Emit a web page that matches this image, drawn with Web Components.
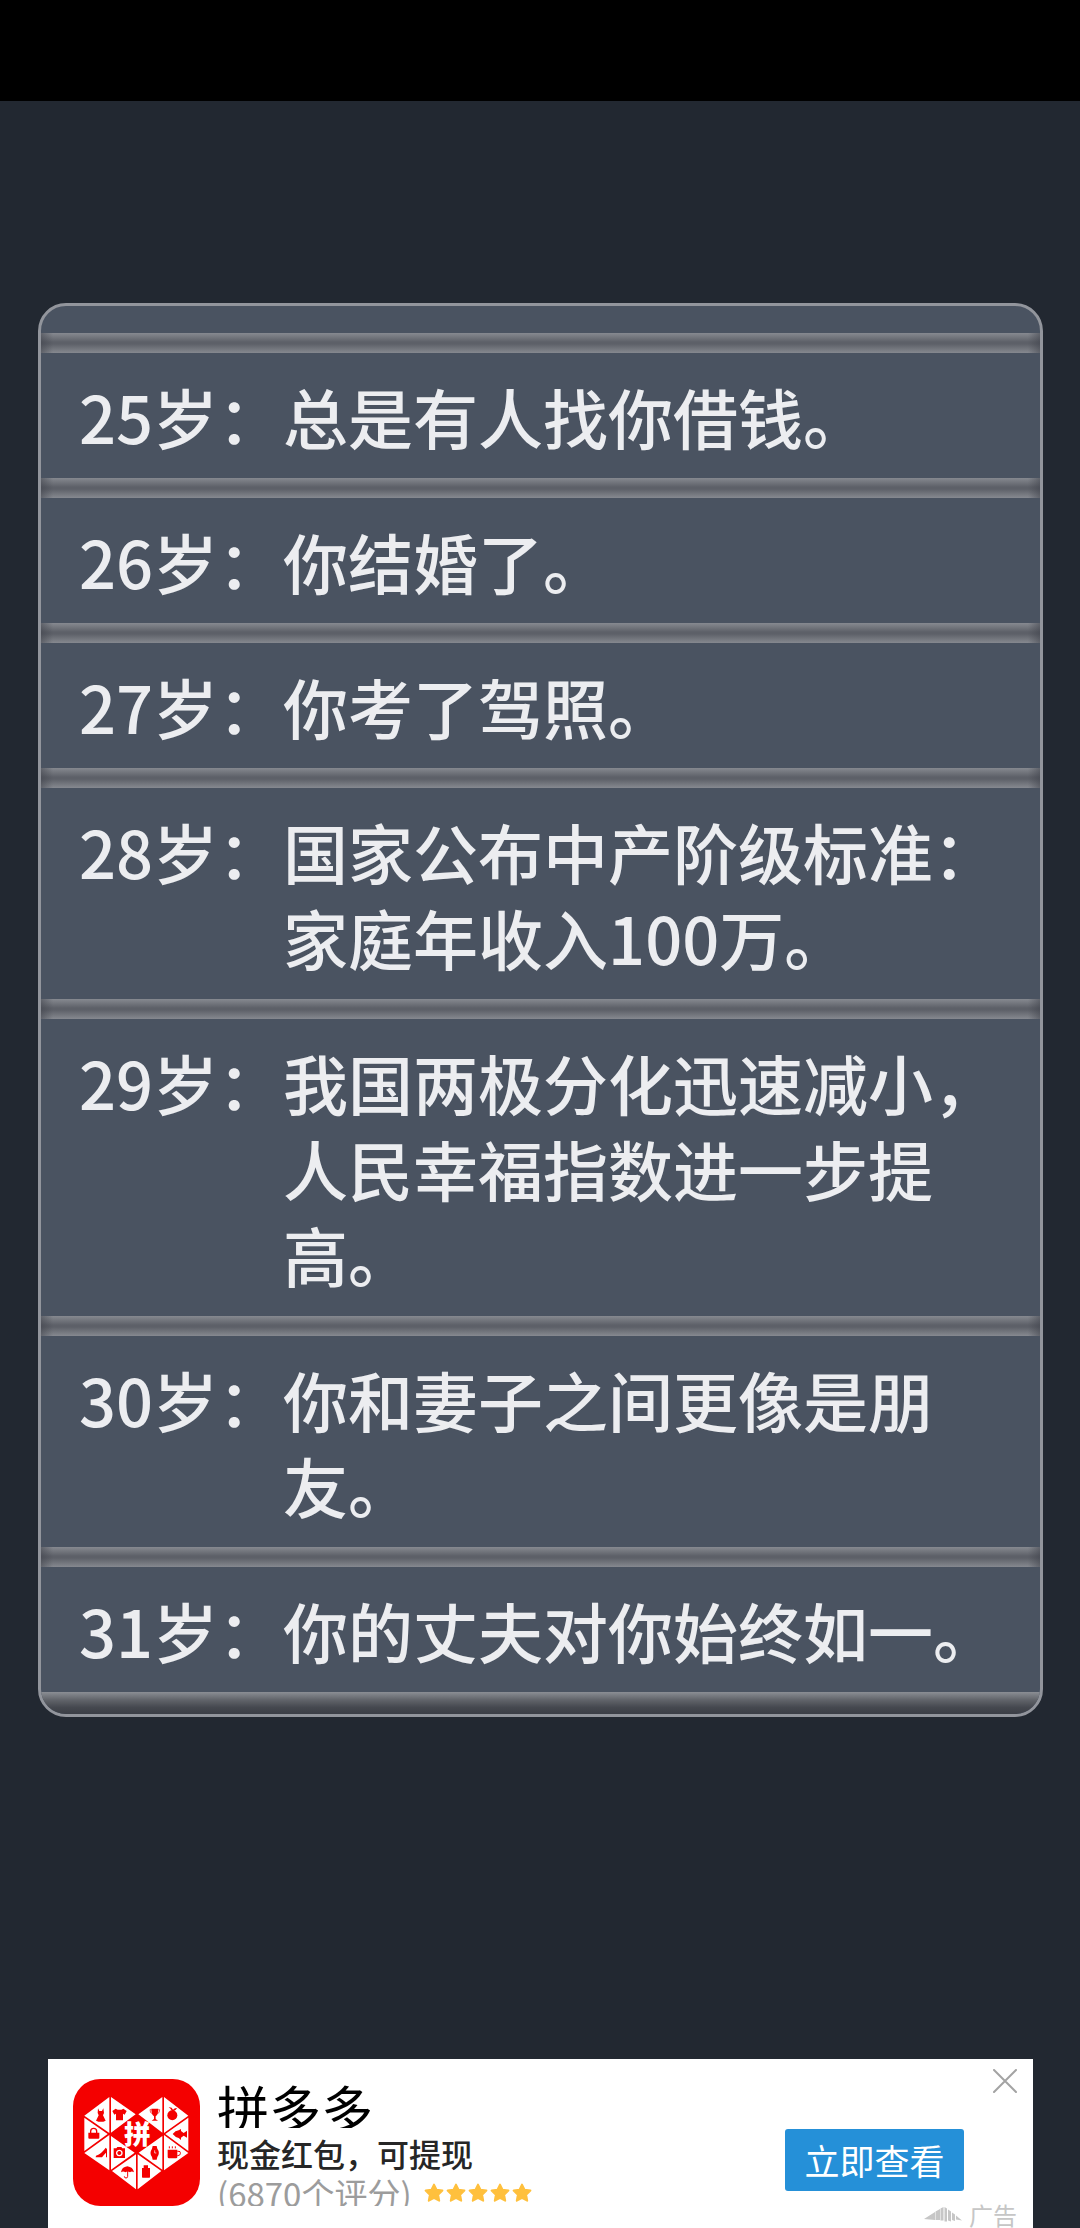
<!DOCTYPE html>
<html lang="zh-CN">
<head>
<meta charset="utf-8">
<meta name="viewport" content="width=device-width, initial-scale=1">
<title>人生记录</title>
<style>
    html, body {
        margin: 0;
        background: #222831;
        font-family: "Noto Sans CJK SC", sans-serif;
    }
</style>
</head>
<body>
<life-page>
    <life-card>
        <life-event age="25岁：">总是有人找你借钱。</life-event>
        <life-event age="26岁：">你结婚了。</life-event>
        <life-event age="27岁：">你考了驾照。</life-event>
        <life-event age="28岁：">国家公布中产阶级标准：家庭年收入100万。</life-event>
        <life-event age="29岁：">我国两极分化迅速减小，人民幸福指数进一步提高。</life-event>
        <life-event age="30岁：">你和妻子之间更像是朋友。</life-event>
        <life-event age="31岁：">你的丈夫对你始终如一。</life-event>
    </life-card>
    <ad-banner slot="footer">
        <app-logo slot="logo"></app-logo>
        <span slot="title">拼多多</span>
        <span slot="subtitle">现金红包，可提现</span>
        <span slot="rating">(6870个评分)</span>
        <star-rating slot="stars"></star-rating>
        <span slot="action">立即查看</span>
    </ad-banner>
</life-page>

<script>
class LifePage extends HTMLElement {
    constructor() {
        super();
        this.attachShadow({ mode: 'open' });
        this.shadowRoot.innerHTML = `
            <style>
                :host {
                    display: flex;
                    flex-direction: column;
                    height: 100vh;
                    min-height: 100%;
                    overflow: hidden;
                    background: #222831;
                }
                .status {
                    flex: none;
                    height: 101px;
                    background: #000;
                }
                main {
                    flex: 1;
                    padding: 202px 37px 0 38px;
                }
                footer {
                    flex: none;
                    padding: 0 47px 0 48px;
                }
            </style>
            <div class="status"></div>
            <main><slot></slot></main>
            <footer><slot name="footer"></slot></footer>
        `;
    }
}

class LifeCard extends HTMLElement {
    constructor() {
        super();
        this.attachShadow({ mode: 'open' });
        this.shadowRoot.innerHTML = `
            <style>
                :host {
                    display: block;
                    box-sizing: border-box;
                    padding-top: 27px;
                    border: 3px solid #92959c;
                    border-radius: 28px;
                    background: #4a5361;
                    overflow: hidden;
                }
                .end {
                    height: 22px;
                    background: linear-gradient(#8b8e94, #62656b 35%, #45484f 70%, #3b3e46);
                }
            </style>
            <div role="list"><slot></slot></div>
            <div class="end"></div>
        `;
    }
}

class LifeEvent extends HTMLElement {
    constructor() {
        super();
        this.attachShadow({ mode: 'open' });
        this.shadowRoot.innerHTML = `
            <style>
                :host {
                    display: block;
                    color: #ecedf0;
                    font-size: 65px;
                    font-weight: 500;
                    line-height: 86px;
                    text-spacing-trim: space-all;
                }
                .seam {
                    height: 20px;
                    background:
                        linear-gradient(90deg, rgba(60, 63, 72, .5), transparent 12px, transparent calc(100% - 12px), rgba(60, 63, 72, .5)),
                        linear-gradient(#868990, #74777e 20%, #5d6068 45%, #5d6068 55%, #74777e 80%, #868990);
                }
                .row {
                    display: flex;
                    padding: 20px 38px 19px;
                }
                .age {
                    flex: none;
                    white-space: nowrap;
                }
                .text {
                    flex: 1;
                    min-width: 0;
                }
            </style>
            <div class="seam"></div>
            <div class="row">
                <span class="age"></span>
                <span class="text"><slot></slot></span>
            </div>
        `;
    }

    static get observedAttributes() {
        return ['age'];
    }

    attributeChangedCallback(name, oldValue, newValue) {
        this.shadowRoot.querySelector('.age').textContent = newValue;
    }

    connectedCallback() {
        this.setAttribute('role', 'listitem');
    }
}

class StarRating extends HTMLElement {
    constructor() {
        super();
        this.attachShadow({ mode: 'open' });
        const star = '<svg viewBox="0 0 20 20"><path d="M10 1.6l2.5 5.2 5.9.8-4.3 4.1 1.1 6L10 14.9l-5.2 2.8 1.1-6L1.6 7.6l5.9-.8z"/></svg>';
        this.shadowRoot.innerHTML = `
            <style>
                :host {
                    display: flex;
                    gap: 2px;
                    padding-top: 2px;
                }
                svg {
                    width: 20px;
                    height: 20px;
                    fill: #ffc03d;
                    stroke: #ffc03d;
                    stroke-width: 2;
                    stroke-linejoin: round;
                }
            </style>
            ${star.repeat(5)}
        `;
    }
}

class AppLogo extends HTMLElement {
    constructor() {
        super();
        this.attachShadow({ mode: 'open' });
        this.shadowRoot.innerHTML = `
            <style>
                :host {
                    display: block;
                    width: 127px;
                    height: 127px;
                }
                svg {
                    display: block;
                    width: 100%;
                    height: 100%;
                }
                text {
                    font-size: 80px;
                    font-weight: 900;
                    text-anchor: middle;
                }
            </style>
            <svg viewBox="-22 -34 381 381" fill="#f40000">
                <rect x="-22" y="-34" width="381" height="381" rx="82"/>
                <path fill="#fff" d="M87 20v108L12 76zM92 20l74 52-74 55zM12 82l70 49-70 51zM87 134v106l-75-52zM92 137l71 50-71 51zM167 192v105l-72-55zM172 192v105l71-55zM246 137v101l-71-51zM251 134v106l73-52zM324 82v100l-69-51zM251 20l73 56-73 52zM246 20v107l-72-55z"/>
                <text x="171" y="160" fill="#fff">拼</text>
                <!-- dress, shirt -->
                <path d="M53 54l4 8h8l4-8 2 14-3 7 8 16q-14 7-29 0l8-16-3-7z"/>
                <path d="M106 55q12 7 23 0l10 7-6 11-5-3v20h-21V70l-5 3-6-11z"/>
                <!-- handbag, shoe -->
                <path d="M24 127h33v15q0 3-3 3H27q-3 0-3-3z"/>
                <path d="M31 128v-5q0-9 9-9t9 9v5" fill="none" stroke="#f40000" stroke-width="4"/>
                <path d="M76 172l4 4v25h-3v-14q-7 7-12 14H46l1-5q18-7 29-24z"/>
                <!-- camera -->
                <path fill-rule="evenodd" d="M100 174h8l3-4h12l3 4h8v29h-34zM117 178a10 10 0 1 0 .1 0zM117 182a6 6 0 1 1-.1 0z"/>
                <!-- cup, fruit -->
                <path d="M213 55h21q0 18-8 23v8l7 5h-19l7-5v-8q-8-5-8-23z"/>
                <path d="M213 58h-4q0 11 7 12M234 58h4q0 11-7 12" fill="none" stroke="#f40000" stroke-width="2"/>
                <circle cx="276" cy="75" r="15"/>
                <path d="M275 62q-5-9-10-11 10-1 13 7 5-6 12-5-3 8-12 10z"/>
                <!-- fish -->
                <path d="M277 131q8-10 18-11l7-4v6l8 6 10-7v21l-10-6-8 6v7l-7-6q-10-2-18-12z"/>
                <!-- watch -->
                <path d="M217 167h12l2 8q9 12 0 25l-2 8h-12l-2-8q-9-12 0-25z"/>
                <path d="M223 180v8h5" fill="none" stroke="#fff" stroke-width="2"/>
                <!-- mug -->
                <path d="M262 178h29v22q0 4-4 4h-21q-4 0-4-4z"/>
                <path d="M291 183h5q4 0 4 4v3q0 6-9 6M267 174v-6M276 174v-6M285 174v-6" fill="none" stroke="#f40000" stroke-width="3"/>
                <!-- umbrella, bottle -->
                <path d="M122 246q2-16 19-18 17 2 20 18-7-5-12 0-7-5-14 0-6-5-13 0z"/>
                <path d="M142 242v16q0 5-5 5t-5-5" fill="none" stroke="#f40000" stroke-width="3"/>
                <path d="M190 225h13v8h6v27q0 2-2 2h-20q-2 0-2-2v-27h5z"/>
            </svg>
        `;
    }
}

class AdBanner extends HTMLElement {
    constructor() {
        super();
        this.attachShadow({ mode: 'open' });
        this.shadowRoot.innerHTML = `
            <style>
                :host {
                    display: flex;
                    box-sizing: border-box;
                    height: 169px;
                    padding: 0 16px 0 25px;
                    background: #fff;
                    overflow: hidden;
                }
                .logo {
                    flex: none;
                    margin-top: 20px;
                }
                .info {
                    flex: 1;
                    min-width: 0;
                    margin: 20px 0 0 17px;
                    white-space: nowrap;
                }
                .title {
                    height: 49px;
                    overflow: hidden;
                    color: #000;
                    font-size: 52px;
                    line-height: 58px;
                }
                .subtitle {
                    color: #262626;
                    font-size: 32px;
                    font-weight: 500;
                    line-height: 50px;
                }
                .rating {
                    display: flex;
                    gap: 12px;
                    align-items: center;
                    height: 28px;
                    overflow: hidden;
                    color: #9c9c9c;
                    font-size: 33px;
                    line-height: 30px;
                }
                .count {
                    height: 28px;
                }
                .side {
                    display: flex;
                    flex: none;
                    flex-direction: column;
                    align-items: flex-end;
                    padding-top: 10px;
                }
                button {
                    padding: 0;
                    border: 0;
                    font-family: inherit;
                    cursor: pointer;
                }
                .close {
                    width: 24px;
                    height: 24px;
                    background: none;
                }
                .close svg {
                    display: block;
                }
                .action {
                    width: 179px;
                    height: 62px;
                    margin: 36px 53px 0 0;
                    border-radius: 3px;
                    background: #2590d8;
                    color: #fff;
                    font-size: 35px;
                    line-height: 60px;
                }
                .tag {
                    display: flex;
                    gap: 7px;
                    align-items: center;
                    margin-top: 12px;
                    color: #c6c6c6;
                    font-size: 24px;
                    line-height: 24px;
                }
            </style>
            <div class="logo"><slot name="logo"></slot></div>
            <div class="info">
                <div class="title"><slot name="title"></slot></div>
                <div class="subtitle"><slot name="subtitle"></slot></div>
                <div class="rating">
                    <span class="count"><slot name="rating"></slot></span>
                    <slot name="stars"></slot>
                </div>
            </div>
            <div class="side">
                <button class="close" type="button" aria-label="关闭">
                    <svg width="24" height="24" viewBox="0 0 24 24" fill="none" stroke="#a3a3a3" stroke-width="2" stroke-linecap="round"><path d="M1 1l22 22M23 1L1 23"/></svg>
                </button>
                <button class="action" type="button"><slot name="action"></slot></button>
                <div class="tag">
                    <svg width="38" height="16" viewBox="0 0 38 16" fill="#c6c6c6"><path d="M0 12L11 5v8zM11.500 4.500L16 2v11h-4.500zM16.500 1.500L19.500 0v13.500h-3zM20.500 0L23 1.500v13h-2.500zM24 2.500l3 2v10l-3-1zM28 5.500l3 2V14l-3-1zM32 8.500l6 5-6-1z"/></svg>
                    <span>广告</span>
                </div>
            </div>
        `;
    }
}

customElements.define('life-page', LifePage);
customElements.define('life-card', LifeCard);
customElements.define('life-event', LifeEvent);
customElements.define('star-rating', StarRating);
customElements.define('app-logo', AppLogo);
customElements.define('ad-banner', AdBanner);
</script>
</body>
</html>
